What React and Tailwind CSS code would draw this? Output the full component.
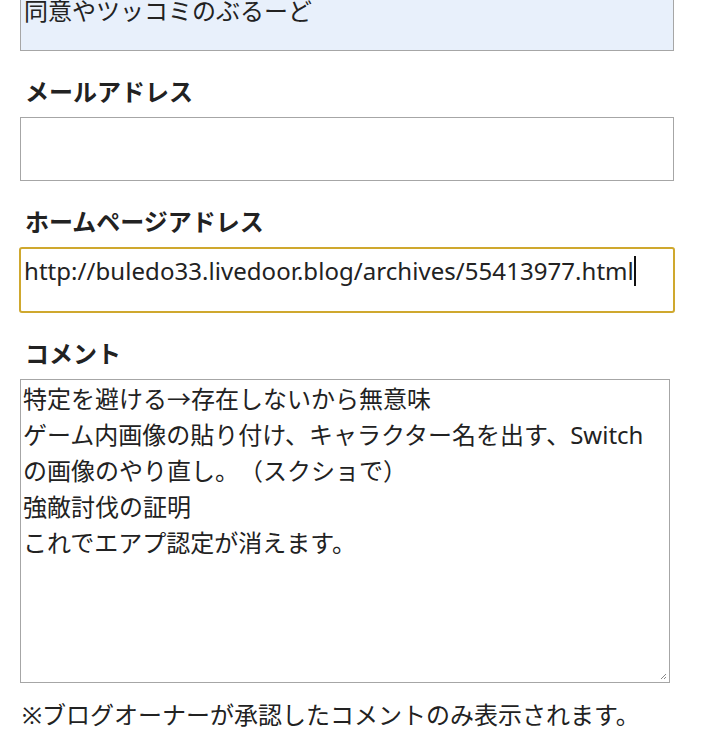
import React from 'react';

const font = { fontFamily: '"Noto Sans", "Noto Sans CJK JP", sans-serif' };

const Label = ({ children }) => (
  <div className="mt-[23px] mb-[7px] pl-[5px] text-[24px] leading-[36px] font-bold text-[#222]">
    {children}
  </div>
);

const ResizeGrip = () => (
  <svg className="absolute right-[2px] bottom-[2px]" width="8" height="8" viewBox="0 0 8 8">
    <path d="M7 2 L2 7 M7 5 L5 7" stroke="#888" strokeWidth="1" />
  </svg>
);

const App = () => {
  return (
    <div className="w-[720px] h-[738px] overflow-hidden bg-white [text-spacing-trim:space-all]" style={font}>
      <div className="px-[20px] -mt-[12px]">
        <div className="w-[654px] h-[63px] border border-[#a6a6a6] bg-[#e8f0fb] px-[3px] pt-[4px] text-[24px] leading-[36px] text-[#222]">
          同意やツッコミのぶるーど
        </div>

        <Label>メールアドレス</Label>
        <div className="w-[654px] h-[64px] border border-[#a6a6a6] bg-white"></div>

        <Label>ホームページアドレス</Label>
        <div className="w-[656px] h-[66px] -ml-px border-2 border-[#cfa82e] rounded-[3px] bg-white px-[3px] pt-[4px] text-[24px] leading-[36px] text-[#222] flex items-start">
          <span className="tracking-[0.05px]">http://buledo33.livedoor.blog/archives/55413977.html</span>
          <span className="inline-block w-[2px] h-[30px] mt-[3px] bg-[#111]"></span>
        </div>

        <Label>コメント</Label>
        <div className="relative w-[650px] h-[304px] border border-[#a6a6a6] bg-white px-[2px] pt-[1px] text-[24px] leading-[36px] text-[#222]">
          <div>特定を避ける→存在しないから無意味</div>
          <div>ゲーム内画像の貼り付け、キャラクター名を出す、Switch</div>
          <div>の画像のやり直し。（スクショで）</div>
          <div>強敵討伐の証明</div>
          <div>これでエアプ認定が消えます。</div>
          <ResizeGrip />
        </div>

        <div className="mt-[14px] pl-[2px] text-[24px] leading-[36px] text-[#222]">
          ※ブログオーナーが承認したコメントのみ表示されます。
        </div>
      </div>
    </div>
  );
};

export default App;
